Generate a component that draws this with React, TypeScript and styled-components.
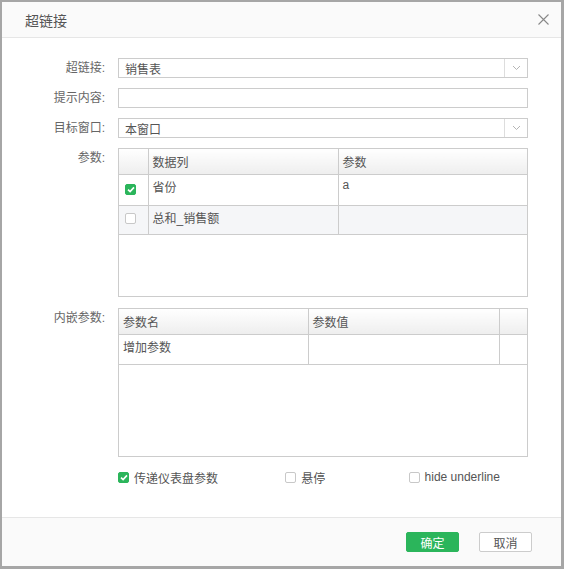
import React from 'react'
import styled, { createGlobalStyle } from 'styled-components'

const GlobalStyle = createGlobalStyle`
  html, body { margin: 0; padding: 0; background: #fff; }
  body { font-family: "Liberation Sans", "Noto Sans CJK SC", sans-serif; font-size: 12px; color: #555; }
`

const Dialog = styled.div`
  box-sizing: border-box;
  width: 564px;
  height: 569px;
  border: 2px solid #a6a6a6;
  border-right-width: 3px;
  border-bottom-width: 3px;
  display: flex;
  flex-direction: column;
  background: #fff;
`

const Header = styled.div`
  height: 35px;
  flex: none;
  background: #fafafa;
  border-bottom: 1px solid #e6e6e6;
  display: flex;
  align-items: center;
  justify-content: space-between;
  padding: 0 12px 0 23px;
`

const Title = styled.div`
  font-size: 14px;
  color: #555;
`

const Body = styled.div`
  flex: 1;
  padding: 20px 33px 0 0;
  display: flex;
  flex-direction: column;
`

const Row = styled.div<{ $gap?: number }>`
  display: flex;
  align-items: flex-start;
  margin-bottom: ${p => p.$gap ?? 10}px;
`

const Label = styled.div`
  width: 103px;
  margin-right: 13px;
  text-align: right;
  line-height: 20px;
  flex: none;
  color: #666;
`

const Field = styled.div`
  box-sizing: border-box;
  width: 410px;
  height: 20px;
  border: 1px solid #ccc;
  display: flex;
  align-items: center;
  color: #555;
`

const FieldText = styled.span`
  flex: 1;
  padding-left: 6px;
`

const Arrow = styled.span`
  width: 22px;
  height: 100%;
  border-left: 1px solid #ddd;
  display: flex;
  align-items: center;
  justify-content: center;
`

const Grid = styled.div<{ $h: number }>`
  box-sizing: border-box;
  width: 410px;
  height: ${p => p.$h}px;
  border: 1px solid #ccc;
  background: #fff;
`

const Table = styled.table`
  width: 100%;
  border-collapse: collapse;
  table-layout: fixed;
`

const Th = styled.th<{ $w?: number }>`
  width: ${p => (p.$w ? `${p.$w}px` : 'auto')};
  height: 25px;
  box-sizing: border-box;
  background: linear-gradient(#fff, #eeeeee);
  border-right: 1px solid #ccc;
  border-bottom: 1px solid #ccc;
  text-align: left;
  font-weight: normal;
  color: #555;
  padding: 0 4px;
  &:last-child { border-right: none; }
`

const Td = styled.td<{ $alt?: boolean; $h?: number }>`
  height: ${p => p.$h ?? 30}px;
  box-sizing: border-box;
  vertical-align: top;
  padding: 3px 4px 0;
  border-right: 1px solid #ccc;
  border-bottom: 1px solid #ccc;
  background: ${p => (p.$alt ? '#f5f6f8' : '#fff')};
  color: #555;
  &:last-child { border-right: none; }
`

const Box = styled.span<{ $on?: boolean }>`
  box-sizing: border-box;
  display: inline-flex;
  align-items: center;
  justify-content: center;
  width: 11px;
  height: 11px;
  border-radius: 2px;
  border: 1px solid ${p => (p.$on ? '#2bb55b' : '#c8c8c8')};
  background: ${p => (p.$on ? '#2bb55b' : '#fff')};
  flex: none;
`

const CheckCell = styled.div`
  padding: 4px 0 0 2px;
`

const Options = styled.div`
  display: flex;
  align-items: center;
  padding-left: 116px;
  height: 20px;
  margin-top: 10px;
`

const Option = styled.label<{ $w: number }>`
  display: flex;
  align-items: center;
  gap: 5px;
  width: ${p => p.$w}px;
  color: #555;
`

const Footer = styled.div`
  height: 48px;
  flex: none;
  background: #fafafa;
  border-top: 1px solid #e6e6e6;
  display: flex;
  align-items: center;
  justify-content: flex-end;
  gap: 20px;
  padding-right: 29px;
`

const Button = styled.button<{ $primary?: boolean }>`
  box-sizing: border-box;
  width: 53px;
  height: 20px;
  border-radius: 2px;
  font-family: inherit;
  font-size: 12px;
  padding: 0;
  cursor: pointer;
  border: 1px solid ${p => (p.$primary ? '#2bb55b' : '#ccc')};
  background: ${p => (p.$primary ? '#2bb55b' : '#fff')};
  color: ${p => (p.$primary ? '#fff' : '#555')};
`

const Check = () => (
  <svg width="8" height="7" viewBox="0 0 8 7">
    <path d="M1 3.6 L3.1 5.6 L7 1.4" stroke="#fff" strokeWidth="1.6" fill="none" />
  </svg>
)

const Chevron = () => (
  <svg width="9" height="6" viewBox="0 0 9 6">
    <path d="M1 1 L4.5 4.5 L8 1" stroke="#b5b5b5" strokeWidth="1" fill="none" />
  </svg>
)

const Select: React.FC<{ value: string }> = ({ value }) => (
  <Field>
    <FieldText>{value}</FieldText>
    <Arrow><Chevron /></Arrow>
  </Field>
)

export default function App() {
  return (
    <>
      <GlobalStyle />
      <Dialog>
        <Header>
          <Title>超链接</Title>
          <svg width="11" height="11" viewBox="0 0 11 11">
            <path d="M0.5 0.5 L10.5 10.5 M10.5 0.5 L0.5 10.5" stroke="#888" strokeWidth="1.1" />
          </svg>
        </Header>
        <Body>
          <Row>
            <Label>超链接:</Label>
            <Select value="销售表" />
          </Row>
          <Row>
            <Label>提示内容:</Label>
            <Field />
          </Row>
          <Row>
            <Label>目标窗口:</Label>
            <Select value="本窗口" />
          </Row>
          <Row $gap={11}>
            <Label>参数:</Label>
            <Grid $h={149}>
              <Table>
                <thead>
                  <tr>
                    <Th $w={29}></Th>
                    <Th $w={190}>数据列</Th>
                    <Th>参数</Th>
                  </tr>
                </thead>
                <tbody>
                  <tr>
                    <Td $h={31}><CheckCell><Box $on><Check /></Box></CheckCell></Td>
                    <Td $h={31}>省份</Td>
                    <Td $h={31}>a</Td>
                  </tr>
                  <tr>
                    <Td $alt $h={29}><CheckCell><Box /></CheckCell></Td>
                    <Td $alt $h={29}>总和_销售额</Td>
                    <Td $alt $h={29}></Td>
                  </tr>
                </tbody>
              </Table>
            </Grid>
          </Row>
          <Row $gap={0}>
            <Label>内嵌参数:</Label>
            <Grid $h={149}>
              <Table>
                <thead>
                  <tr>
                    <Th $w={189}>参数名</Th>
                    <Th $w={191}>参数值</Th>
                    <Th></Th>
                  </tr>
                </thead>
                <tbody>
                  <tr>
                    <Td>增加参数</Td>
                    <Td></Td>
                    <Td></Td>
                  </tr>
                </tbody>
              </Table>
            </Grid>
          </Row>
          <Options>
            <Option $w={168}><Box $on><Check /></Box>传递仪表盘参数</Option>
            <Option $w={124}><Box />悬停</Option>
            <Option $w={120}><Box />hide underline</Option>
          </Options>
        </Body>
        <Footer>
          <Button $primary>确定</Button>
          <Button>取消</Button>
        </Footer>
      </Dialog>
    </>
  )
}
